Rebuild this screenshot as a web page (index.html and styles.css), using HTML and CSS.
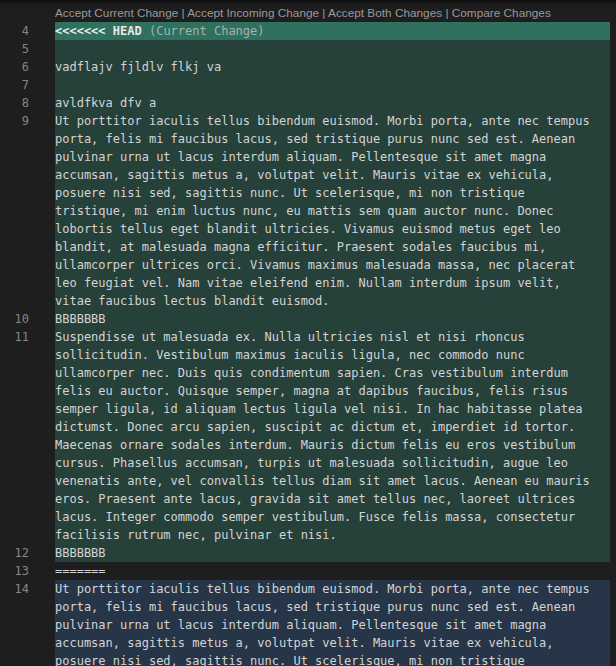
FILE: index.html
```html
<!DOCTYPE html>
<html>
<head>
<meta charset="utf-8">
<link rel="stylesheet" href="styles.css">
</head>
<body>
<div class="editor">
  <div class="codelens"><span class="lens">Accept Current Change | Accept Incoming Change | Accept Both Changes | Compare Changes</span></div>

  <div class="line"><span class="ln">4</span><div class="code current-head"><span class="v"><b>&lt;&lt;&lt;&lt;&lt;&lt;&lt; HEAD</b><span class="hint"> (Current Change)</span></span></div></div>
  <div class="line"><span class="ln">5</span><div class="code current"><span class="v"> </span></div></div>
  <div class="line"><span class="ln">6</span><div class="code current"><span class="v">vadflajv fjldlv flkj va</span></div></div>
  <div class="line"><span class="ln">7</span><div class="code current"><span class="v"> </span></div></div>
  <div class="line"><span class="ln">8</span><div class="code current"><span class="v">avldfkva dfv a</span></div></div>
  <div class="line"><span class="ln">9</span><div class="code current">
    <span class="v">Ut porttitor iaculis tellus bibendum euismod. Morbi porta, ante nec tempus</span>
    <span class="v">porta, felis mi faucibus lacus, sed tristique purus nunc sed est. Aenean</span>
    <span class="v">pulvinar urna ut lacus interdum aliquam. Pellentesque sit amet magna</span>
    <span class="v">accumsan, sagittis metus a, volutpat velit. Mauris vitae ex vehicula,</span>
    <span class="v">posuere nisi sed, sagittis nunc. Ut scelerisque, mi non tristique</span>
    <span class="v">tristique, mi enim luctus nunc, eu mattis sem quam auctor nunc. Donec</span>
    <span class="v">lobortis tellus eget blandit ultricies. Vivamus euismod metus eget leo</span>
    <span class="v">blandit, at malesuada magna efficitur. Praesent sodales faucibus mi,</span>
    <span class="v">ullamcorper ultrices orci. Vivamus maximus malesuada massa, nec placerat</span>
    <span class="v">leo feugiat vel. Nam vitae eleifend enim. Nullam interdum ipsum velit,</span>
    <span class="v">vitae faucibus lectus blandit euismod.</span>
  </div></div>
  <div class="line"><span class="ln">10</span><div class="code current"><span class="v">BBBBBBB</span></div></div>
  <div class="line"><span class="ln">11</span><div class="code current">
    <span class="v">Suspendisse ut malesuada ex. Nulla ultricies nisl et nisi rhoncus</span>
    <span class="v">sollicitudin. Vestibulum maximus iaculis ligula, nec commodo nunc</span>
    <span class="v">ullamcorper nec. Duis quis condimentum sapien. Cras vestibulum interdum</span>
    <span class="v">felis eu auctor. Quisque semper, magna at dapibus faucibus, felis risus</span>
    <span class="v">semper ligula, id aliquam lectus ligula vel nisi. In hac habitasse platea</span>
    <span class="v">dictumst. Donec arcu sapien, suscipit ac dictum et, imperdiet id tortor.</span>
    <span class="v">Maecenas ornare sodales interdum. Mauris dictum felis eu eros vestibulum</span>
    <span class="v">cursus. Phasellus accumsan, turpis ut malesuada sollicitudin, augue leo</span>
    <span class="v">venenatis ante, vel convallis tellus diam sit amet lacus. Aenean eu mauris</span>
    <span class="v">eros. Praesent ante lacus, gravida sit amet tellus nec, laoreet ultrices</span>
    <span class="v">lacus. Integer commodo semper vestibulum. Fusce felis massa, consectetur</span>
    <span class="v">facilisis rutrum nec, pulvinar et nisi.</span>
  </div></div>
  <div class="line"><span class="ln">12</span><div class="code current"><span class="v">BBBBBBB</span></div></div>
  <div class="line"><span class="ln">13</span><div class="code"><span class="v">=======</span></div></div>
  <div class="line"><span class="ln">14</span><div class="code incoming">
    <span class="v">Ut porttitor iaculis tellus bibendum euismod. Morbi porta, ante nec tempus</span>
    <span class="v">porta, felis mi faucibus lacus, sed tristique purus nunc sed est. Aenean</span>
    <span class="v">pulvinar urna ut lacus interdum aliquam. Pellentesque sit amet magna</span>
    <span class="v">accumsan, sagittis metus a, volutpat velit. Mauris vitae ex vehicula,</span>
    <span class="v">posuere nisi sed, sagittis nunc. Ut scelerisque, mi non tristique</span>
    <span class="v">tristique, mi enim luctus nunc, eu mattis sem quam auctor nunc. Donec</span>
  </div></div>
</div>
</body>
</html>
```

FILE: styles.css
```css
html, body {
  margin: 0;
  padding: 0;
  background: #1e1e1e;
  overflow: hidden;
  height: 666px;
}
.editor {
  width: 616px;
  height: 666px;
  overflow: hidden;
  background: #1e1e1e;
  font-family: "DejaVu Sans Mono", monospace;
  font-size: 12px;
  color: #d4d4d4;
}
.codelens {
  height: 22px;
  padding-left: 55px;
  box-sizing: border-box;
  padding-top: 5px;
  font-family: "Liberation Sans", Arial, sans-serif;
  font-size: 11.8px;
  line-height: 16px;
  color: #999999;
  box-shadow: inset 0 6px 6px -6px #000000;
}
.line {
  display: flex;
}
.ln {
  width: 29px;
  margin-right: 26px;
  text-align: right;
  color: #858585;
  line-height: 18px;
  flex: none;
}
.code {
  width: 555px;
  flex: none;
  line-height: 18px;
}
.v {
  display: block;
  white-space: pre;
  height: 18px;
}
.current-head {
  background: #2f705f;
}
.current {
  background: #26403a;
}
.incoming {
  background: #263548;
}
.current-head b {
  font-weight: bold;
  color: #e8e8e8;
}
.hint {
  color: #a6b3ae;
}
```
